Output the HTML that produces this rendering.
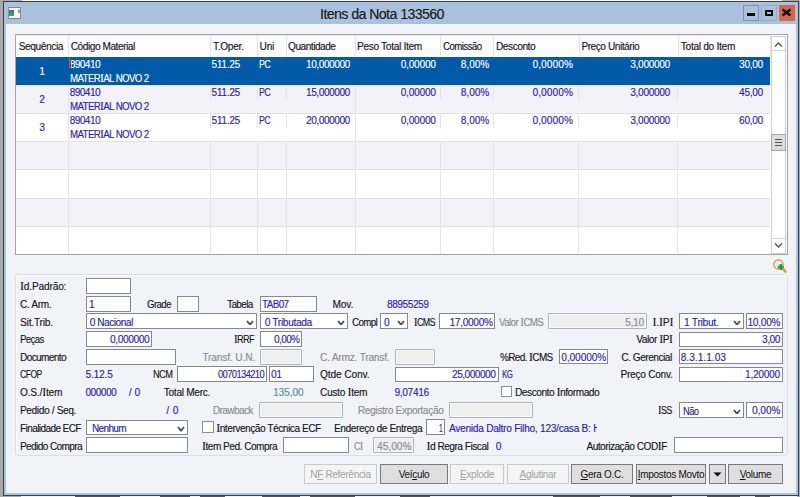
<!DOCTYPE html>
<html><head><meta charset="utf-8">
<style>
*{box-sizing:border-box;margin:0;padding:0}
html,body{width:800px;height:497px;overflow:hidden;background:#a9a9a9;position:relative}
body{font-family:"Liberation Sans",sans-serif;font-size:10px;letter-spacing:-0.3px;color:#16161e}
.a{position:absolute}
.t{position:absolute;white-space:nowrap;line-height:12px;height:12px;text-shadow:0.4px 0 0 rgba(20,20,30,0.35)}
.r{text-align:right}
.c{text-align:center}
.v{color:#2c1cb4;text-shadow:0.4px 0 0 rgba(44,28,180,0.35)}
.g{color:#8a8a98;text-shadow:0.4px 0 0 rgba(138,138,152,0.35)}
.w{color:#fff;text-shadow:0.4px 0 0 rgba(255,255,255,0.35)}
.inp{position:absolute;background:#fff;border:1px solid #858890}
.dis{position:absolute;background:#efefef;border:1px solid #afb3bb;border-radius:1px;box-shadow:inset 1px 1px 0 #f8f8f8,inset -1px -1px 0 #f8f8f8}
.hd{position:absolute;top:36px;height:21px;width:1px;background:#e4e4e4}
.btn{position:absolute;border:1px solid #7a7a7a;background:#dedede;text-align:center;line-height:19px;color:#111}
.btnd{position:absolute;border:1px solid #cacaca;background:#f4f4f4;text-align:center;line-height:19px;color:#a2a2a2}
.u{text-decoration:underline}
.si{font-family:"Liberation Serif",serif;font-size:11.5px;line-height:0}
</style></head><body>
<div class="a" style="left:21px;top:495px;width:776px;height:2px;background:#f4f4f4"></div>
<div class="a" style="left:22px;top:0;width:760px;height:1px;background:#f6f6f6"></div>
<div class="a" style="left:3px;top:1px;width:796px;height:495px;background:#3e4248"></div>
<div class="a" style="left:4px;top:2px;width:794px;height:493px;background:#a8c1dd"></div>
<div class="a" style="left:6px;top:24px;width:790px;height:469px;background:#f2f3f8"></div>
<div class="a" style="left:8px;top:7px;width:13px;height:12px;border:1px solid #8a8a8a;background:#f6f6f6"></div>
<div class="a" style="left:9px;top:10px;width:5px;height:6px;background:linear-gradient(#3a6ec0,#3cae5a)"></div>
<div class="a" style="left:18px;top:10px;width:2px;height:3px;background:linear-gradient(#4a7ed0,#7ed07a)"></div>
<div class="t" style="left:320px;top:6px;font-size:14px;line-height:16px;height:16px;letter-spacing:-0.5px;color:#1a1a1a">Itens da Nota 133560</div>
<div class="a" style="left:743px;top:5px;width:16px;height:16px;border:1px solid #7f92ad;background:#a8c1dd"></div>
<div class="a" style="left:747px;top:13px;width:8px;height:3px;background:#000"></div>
<div class="a" style="left:761px;top:5px;width:16px;height:16px;border:1px solid #97abc6;background:#a8c1dd"></div>
<div class="a" style="left:765px;top:10px;width:8px;height:6px;border:2px solid #000"></div>
<div class="a" style="left:779px;top:5px;width:16px;height:16px;background:#d9654c"></div>
<svg class="a" style="left:779px;top:5px" width="16" height="16"><path d="M3.5 4.5 L11.5 10.5 M11.5 4.5 L3.5 10.5" stroke="#000" stroke-width="2.2"/></svg>
<div class="a" style="left:15px;top:34px;width:773px;height:221px;border:1px solid #a4a4a8;background:#fff"></div>
<div class="a" style="left:16px;top:35px;width:754px;height:22px;background:#fcfcfc;border-top:1px solid #e8e8e8"></div>
<div class="hd" style="left:68px"></div>
<div class="hd" style="left:210px"></div>
<div class="hd" style="left:257px"></div>
<div class="hd" style="left:286px"></div>
<div class="hd" style="left:355px"></div>
<div class="hd" style="left:440px"></div>
<div class="hd" style="left:493px"></div>
<div class="hd" style="left:579px"></div>
<div class="hd" style="left:678px"></div>
<div class="hd" style="left:770px"></div>
<div class="t " style="left:18.7px;top:41px;letter-spacing:-0.325px;">Sequência</div>
<div class="t " style="left:70.8px;top:41px;letter-spacing:-0.401px;">Código Material</div>
<div class="t " style="left:212.9px;top:41px;letter-spacing:-0.193px;">T.Oper.</div>
<div class="t " style="left:259.6px;top:41px;letter-spacing:-0.142px;">Uni</div>
<div class="t " style="left:288.1px;top:41px;letter-spacing:-0.439px;">Quantidade</div>
<div class="t " style="left:357.0px;top:41px;letter-spacing:-0.256px;">Peso Total Item</div>
<div class="t " style="left:443.0px;top:41px;letter-spacing:-0.55px;transform:scaleX(0.9599);transform-origin:0 0;">Comissão</div>
<div class="t " style="left:496.0px;top:41px;letter-spacing:-0.384px;">Desconto</div>
<div class="t " style="left:581.4px;top:41px;letter-spacing:-0.4px;">Preço Unitário</div>
<div class="t " style="left:680.8px;top:41px;letter-spacing:-0.235px;">Total do Item</div>
<div class="a" style="left:16px;top:57px;width:754px;height:28px;background:#025aa9"></div>
<div class="a" style="left:16px;top:85px;width:754px;height:28px;background:#f2f2f8;border-top:1px solid #e2e2e5"></div>
<div class="a" style="left:16px;top:113px;width:754px;height:28px;background:#ffffff;border-top:1px solid #e2e2e5"></div>
<div class="a" style="left:16px;top:141px;width:754px;height:28px;background:#f2f2f8;border-top:1px solid #e2e2e5"></div>
<div class="a" style="left:16px;top:169px;width:754px;height:29px;background:#ffffff;border-top:1px solid #e2e2e5"></div>
<div class="a" style="left:16px;top:198px;width:754px;height:28px;background:#f2f2f8;border-top:1px solid #e2e2e5"></div>
<div class="a" style="left:16px;top:226px;width:754px;height:28px;background:#ffffff;border-top:1px solid #e2e2e5"></div>
<div class="a" style="left:68px;top:85px;width:1px;height:169px;background:#e3e3e8"></div>
<div class="a" style="left:355px;top:85px;width:1px;height:169px;background:#e3e3e8"></div>
<div class="a" style="left:210px;top:85px;width:1px;height:15px;background:#e3e3e8"></div>
<div class="a" style="left:210px;top:113px;width:1px;height:15px;background:#e3e3e8"></div>
<div class="a" style="left:210px;top:141px;width:1px;height:113px;background:#e3e3e8"></div>
<div class="a" style="left:257px;top:85px;width:1px;height:15px;background:#e3e3e8"></div>
<div class="a" style="left:257px;top:113px;width:1px;height:15px;background:#e3e3e8"></div>
<div class="a" style="left:257px;top:141px;width:1px;height:113px;background:#e3e3e8"></div>
<div class="a" style="left:286px;top:85px;width:1px;height:15px;background:#e3e3e8"></div>
<div class="a" style="left:286px;top:113px;width:1px;height:15px;background:#e3e3e8"></div>
<div class="a" style="left:286px;top:141px;width:1px;height:113px;background:#e3e3e8"></div>
<div class="a" style="left:440px;top:85px;width:1px;height:15px;background:#e3e3e8"></div>
<div class="a" style="left:440px;top:113px;width:1px;height:15px;background:#e3e3e8"></div>
<div class="a" style="left:440px;top:141px;width:1px;height:113px;background:#e3e3e8"></div>
<div class="a" style="left:493px;top:85px;width:1px;height:15px;background:#e3e3e8"></div>
<div class="a" style="left:493px;top:113px;width:1px;height:15px;background:#e3e3e8"></div>
<div class="a" style="left:493px;top:141px;width:1px;height:113px;background:#e3e3e8"></div>
<div class="a" style="left:578px;top:85px;width:1px;height:15px;background:#e3e3e8"></div>
<div class="a" style="left:578px;top:113px;width:1px;height:15px;background:#e3e3e8"></div>
<div class="a" style="left:578px;top:141px;width:1px;height:113px;background:#e3e3e8"></div>
<div class="a" style="left:677px;top:85px;width:1px;height:15px;background:#e3e3e8"></div>
<div class="a" style="left:677px;top:113px;width:1px;height:15px;background:#e3e3e8"></div>
<div class="a" style="left:677px;top:141px;width:1px;height:113px;background:#e3e3e8"></div>
<div class="t w c" style="left:16px;width:52px;top:66px">1</div>
<div class="t w" style="left:69.7px;top:59px;letter-spacing:-0.502px;">890410</div>
<div class="t w" style="left:70.0px;top:73px;letter-spacing:-0.55px;transform:scaleX(0.9555);transform-origin:0 0;">MATER<span class="si">I</span>AL NOVO 2</div>
<div class="t w" style="left:211.4px;top:59px;letter-spacing:-0.216px;">511.25</div>
<div class="t w" style="left:259.0px;top:59px;letter-spacing:-0.55px;transform:scaleX(0.8689);transform-origin:0 0;">PC</div>
<div class="t w" style="left:306.0px;top:59px;letter-spacing:-0.389px;">10,000000</div>
<div class="t w" style="left:400.7px;top:59px;letter-spacing:-0.164px;">0,00000</div>
<div class="t w" style="left:460.8px;top:59px;letter-spacing:0.009px;">8,00%</div>
<div class="t w" style="left:532.5px;top:59px;letter-spacing:0.136px;">0,0000%</div>
<div class="t w" style="left:630.3px;top:59px;letter-spacing:-0.264px;">3,000000</div>
<div class="t w" style="left:739.1px;top:59px;letter-spacing:-0.266px;">30,00</div>
<div class="t v c" style="left:16px;width:52px;top:94px">2</div>
<div class="t v" style="left:69.7px;top:87px;letter-spacing:-0.502px;">890410</div>
<div class="t v" style="left:70.0px;top:101px;letter-spacing:-0.55px;transform:scaleX(0.9555);transform-origin:0 0;">MATER<span class="si">I</span>AL NOVO 2</div>
<div class="t v" style="left:211.4px;top:87px;letter-spacing:-0.216px;">511.25</div>
<div class="t v" style="left:259.0px;top:87px;letter-spacing:-0.55px;transform:scaleX(0.8689);transform-origin:0 0;">PC</div>
<div class="t v" style="left:306.0px;top:87px;letter-spacing:-0.389px;">15,000000</div>
<div class="t v" style="left:400.7px;top:87px;letter-spacing:-0.164px;">0,00000</div>
<div class="t v" style="left:460.8px;top:87px;letter-spacing:0.009px;">8,00%</div>
<div class="t v" style="left:532.5px;top:87px;letter-spacing:0.136px;">0,0000%</div>
<div class="t v" style="left:630.3px;top:87px;letter-spacing:-0.264px;">3,000000</div>
<div class="t v" style="left:739.1px;top:87px;letter-spacing:-0.266px;">45,00</div>
<div class="t v c" style="left:16px;width:52px;top:122px">3</div>
<div class="t v" style="left:69.7px;top:115px;letter-spacing:-0.502px;">890410</div>
<div class="t v" style="left:70.0px;top:129px;letter-spacing:-0.55px;transform:scaleX(0.9555);transform-origin:0 0;">MATER<span class="si">I</span>AL NOVO 2</div>
<div class="t v" style="left:211.4px;top:115px;letter-spacing:-0.216px;">511.25</div>
<div class="t v" style="left:259.0px;top:115px;letter-spacing:-0.55px;transform:scaleX(0.8689);transform-origin:0 0;">PC</div>
<div class="t v" style="left:306.0px;top:115px;letter-spacing:-0.389px;">20,000000</div>
<div class="t v" style="left:400.7px;top:115px;letter-spacing:-0.164px;">0,00000</div>
<div class="t v" style="left:460.8px;top:115px;letter-spacing:0.009px;">8,00%</div>
<div class="t v" style="left:532.5px;top:115px;letter-spacing:0.136px;">0,0000%</div>
<div class="t v" style="left:630.3px;top:115px;letter-spacing:-0.264px;">3,000000</div>
<div class="t v" style="left:739.1px;top:115px;letter-spacing:-0.266px;">60,00</div>
<div class="a" style="left:69px;top:58px;width:2px;height:10px;background:linear-gradient(90deg,#c08040,#603020)"></div>
<div class="a" style="left:771px;top:36px;width:15px;height:218px;background:#fff;border:1px solid #cfcfcf"></div>
<div class="a" style="left:772px;top:50px;width:13px;height:1px;background:#d4d4d4"></div>
<div class="a" style="left:772px;top:238px;width:13px;height:1px;background:#d4d4d4"></div>
<svg class="a" style="left:774px;top:41px" width="9" height="7"><path d="M1 5.5 L4.5 2 L8 5.5" fill="none" stroke="#555" stroke-width="1.5"/></svg>
<svg class="a" style="left:774px;top:242px" width="9" height="7"><path d="M1 1.5 L4.5 5 L8 1.5" fill="none" stroke="#555" stroke-width="1.5"/></svg>
<div class="a" style="left:771px;top:134px;width:15px;height:17px;background:#dcdcdc;border:1px solid #a8a8a8"></div>
<div class="a" style="left:775px;top:139px;width:7px;height:1px;background:#555"></div>
<div class="a" style="left:775px;top:142px;width:7px;height:1px;background:#555"></div>
<div class="a" style="left:775px;top:145px;width:7px;height:1px;background:#555"></div>
<svg class="a" style="left:770px;top:256px" width="20" height="20"><circle cx="8.5" cy="8.5" r="4.6" fill="#e8eef8" stroke="#d9a860" stroke-width="1.6"/><path d="M12 12 L15.5 15.5" stroke="#d0a050" stroke-width="2.6" stroke-linecap="round"/><path d="M10.8 8 v6 M7.8 11 h6" stroke="#2e9a3a" stroke-width="2.4"/></svg>
<div class="a" style="left:15px;top:274px;width:773px;height:182px;border:1px solid #dcdfe6;border-radius:3px;box-shadow:inset 1px 1px 0 #fbfbfd"></div>
<div class="t " style="left:20.0px;top:281px;letter-spacing:-0.09px;"><span class="si">I</span>d.Padrão:</div>
<div class="inp" style="left:86px;top:278px;width:45px;height:16px;"></div>
<div class="t " style="left:20.0px;top:299px;letter-spacing:-0.31px;">C. Arm.</div>
<div class="inp" style="left:86px;top:296px;width:45px;height:16px;"></div>
<div class="t v" style="left:89px;top:299px;">1</div>
<div class="t " style="left:147.3px;top:299px;letter-spacing:-0.55px;transform:scaleX(0.9565);transform-origin:0 0;">Grade</div>
<div class="inp" style="left:177px;top:296px;width:22px;height:16px;"></div>
<div class="t " style="left:227.0px;top:299px;letter-spacing:-0.55px;transform:scaleX(0.9832);transform-origin:0 0;">Tabela</div>
<div class="inp" style="left:260px;top:296px;width:57px;height:16px;"></div>
<div class="t v" style="left:262.0px;top:299px;letter-spacing:-0.55px;transform:scaleX(0.9798);transform-origin:0 0;">TAB07</div>
<div class="t " style="left:332.5px;top:299px;letter-spacing:-0.05px;">Mov.</div>
<div class="t v" style="left:387.0px;top:299px;letter-spacing:-0.383px;">88955259</div>
<div class="t " style="left:20.0px;top:317px;letter-spacing:-0.131px;">Sit.Trib.</div>
<div class="inp" style="left:86px;top:313px;width:171px;height:16px;"></div>
<div class="t v" style="left:89.7px;top:317px;letter-spacing:-0.414px;">0 Nacional</div>
<svg class="a" style="left:246.0px;top:319.5px" width="8" height="5.6"><path d="M1 1 L4.0 4.6 L7 1" fill="none" stroke="#4a4a4a" stroke-width="1.8"/></svg>
<div class="inp" style="left:260px;top:313px;width:88px;height:16px;"></div>
<div class="t v" style="left:264.7px;top:317px;letter-spacing:-0.255px;">0 Tributada</div>
<svg class="a" style="left:337.0px;top:319.5px" width="8" height="5.6"><path d="M1 1 L4.0 4.6 L7 1" fill="none" stroke="#4a4a4a" stroke-width="1.8"/></svg>
<div class="t " style="left:352.0px;top:317px;letter-spacing:-0.55px;transform:scaleX(0.9632);transform-origin:0 0;">Compl</div>
<div class="inp" style="left:380px;top:313px;width:28px;height:16px;"></div>
<div class="t v" style="left:384px;top:317px;">0</div>
<svg class="a" style="left:397.0px;top:319.5px" width="8" height="5.6"><path d="M1 1 L4.0 4.6 L7 1" fill="none" stroke="#4a4a4a" stroke-width="1.8"/></svg>
<div class="t " style="left:413.75px;top:317px;letter-spacing:-0.55px;transform:scaleX(0.8795);transform-origin:0 0;"><span class="si">I</span>CMS</div>
<div class="inp" style="left:439px;top:313px;width:56px;height:16px;"></div>
<div class="t v" style="left:449.5px;top:317px;letter-spacing:-0.235px;">17,0000%</div>
<div class="t g" style="left:498.75px;top:317px;letter-spacing:-0.55px;transform:scaleX(0.9613);transform-origin:0 0;">Valor <span class="si">I</span>CMS</div>
<div class="dis" style="left:548px;top:313px;width:99px;height:16px;"></div>
<div class="t g" style="left:625.0px;top:317px;letter-spacing:-0.134px;">5,10</div>
<div class="t " style="left:652.5px;top:317px;letter-spacing:-0.038px;"><span class="si">I</span>.<span class="si">I</span>P<span class="si">I</span></div>
<div class="inp" style="left:679px;top:313px;width:65px;height:16px;"></div>
<div class="t v" style="left:684.1px;top:317px;letter-spacing:-0.204px;">1 Tribut.</div>
<svg class="a" style="left:733.0px;top:319.5px" width="8" height="5.6"><path d="M1 1 L4.0 4.6 L7 1" fill="none" stroke="#4a4a4a" stroke-width="1.8"/></svg>
<div class="inp" style="left:746px;top:313px;width:37px;height:16px;"></div>
<div class="t v" style="left:747.5px;top:317px;letter-spacing:-0.205px;">10,00%</div>
<div class="t " style="left:20.0px;top:334px;letter-spacing:-0.55px;transform:scaleX(0.9456);transform-origin:0 0;">Peças</div>
<div class="inp" style="left:86px;top:331px;width:66px;height:16px;"></div>
<div class="t v" style="left:110.0px;top:334px;letter-spacing:-0.307px;">0,000000</div>
<div class="t " style="left:234.0px;top:334px;letter-spacing:-0.55px;transform:scaleX(0.9018);transform-origin:0 0;"><span class="si">I</span>RRF</div>
<div class="inp" style="left:260px;top:331px;width:42px;height:16px;"></div>
<div class="t v" style="left:274.0px;top:334px;letter-spacing:-0.55px;transform:scaleX(0.99);transform-origin:0 0;">0,00%</div>
<div class="t " style="left:636.25px;top:334px;letter-spacing:-0.397px;">Valor <span class="si">I</span>P<span class="si">I</span></div>
<div class="inp" style="left:679px;top:332px;width:104px;height:15px;"></div>
<div class="t v" style="left:762.0px;top:334px;letter-spacing:-0.384px;">3,00</div>
<div class="t " style="left:20.0px;top:352px;letter-spacing:-0.55px;transform:scaleX(0.9963);transform-origin:0 0;">Documento</div>
<div class="inp" style="left:86px;top:349px;width:90px;height:16px;"></div>
<div class="t g" style="left:202.4px;top:352px;letter-spacing:-0.068px;">Transf. U.N.</div>
<div class="dis" style="left:260px;top:349px;width:42px;height:16px;"></div>
<div class="t g" style="left:320.0px;top:352px;letter-spacing:-0.142px;">C. Armz. Transf.</div>
<div class="dis" style="left:395px;top:349px;width:40px;height:16px;"></div>
<div class="t " style="left:499.5px;top:352px;letter-spacing:-0.55px;transform:scaleX(0.9867);transform-origin:0 0;">%Red. <span class="si">I</span>CMS</div>
<div class="inp" style="left:559px;top:349px;width:49px;height:15px;"></div>
<div class="t v" style="left:561.25px;top:352px;letter-spacing:-0.021px;">0,00000%</div>
<div class="t " style="left:621.25px;top:352px;letter-spacing:-0.419px;">C. Gerencial</div>
<div class="inp" style="left:679px;top:349px;width:104px;height:15px;"></div>
<div class="t v" style="left:680.65px;top:352px;letter-spacing:0.081px;">8.3.1.1.03</div>
<div class="t " style="left:20.25px;top:369px;letter-spacing:-0.55px;transform:scaleX(0.8485);transform-origin:0 0;">CFOP</div>
<div class="t v" style="left:85.5px;top:369px;letter-spacing:-0.108px;">5.12.5</div>
<div class="t " style="left:153.0px;top:369px;letter-spacing:-0.55px;transform:scaleX(0.9136);transform-origin:0 0;">NCM</div>
<div class="inp" style="left:177px;top:366px;width:90px;height:16px;"></div>
<div class="t v" style="left:218.0px;top:369px;letter-spacing:-0.55px;transform:scaleX(0.9197);transform-origin:0 0;">0070134210</div>
<div class="inp" style="left:269px;top:366px;width:45px;height:16px;"></div>
<div class="t v" style="left:271px;top:369px;">01</div>
<div class="t " style="left:320.0px;top:369px;letter-spacing:-0.035px;">Qtde Conv.</div>
<div class="inp" style="left:395px;top:367px;width:104px;height:15px;"></div>
<div class="t v" style="left:452.0px;top:369px;letter-spacing:-0.432px;">25,000000</div>
<div class="t v" style="left:502.0px;top:369px;letter-spacing:-0.55px;transform:scaleX(0.779);transform-origin:0 0;">KG</div>
<div class="t " style="left:620.5px;top:369px;letter-spacing:-0.2px;">Preço Conv.</div>
<div class="inp" style="left:679px;top:367px;width:104px;height:15px;"></div>
<div class="t v" style="left:745.0px;top:369px;letter-spacing:-0.181px;">1,20000</div>
<div class="t " style="left:20.0px;top:387px;letter-spacing:-0.119px;">O.S./<span class="si">I</span>tem</div>
<div class="t v" style="left:85.5px;top:387px;letter-spacing:-0.462px;">000000</div>
<div class="t v" style="left:128.75px;top:387px;letter-spacing:0.097px;">/ 0</div>
<div class="t " style="left:163.75px;top:387px;letter-spacing:-0.237px;">Total Merc.</div>
<div class="t " style="left:273.0px;top:387px;letter-spacing:-0.055px;color:#5e9ea6">135,00</div>
<div class="t " style="left:320.0px;top:387px;letter-spacing:-0.23px;">Custo <span class="si">I</span>tem</div>
<div class="t v" style="left:394.5px;top:387px;letter-spacing:-0.264px;">9,07416</div>
<div class="inp" style="left:501px;top:386px;width:11px;height:11px;border-color:#8e8e8e"></div>
<div class="t " style="left:515.0px;top:387px;letter-spacing:-0.385px;">Desconto <span class="si">I</span>nformado</div>
<div class="t " style="left:20.0px;top:405px;letter-spacing:-0.314px;">Pedido / Seq.</div>
<div class="t v" style="left:166.25px;top:405px;letter-spacing:0.472px;">/ 0</div>
<div class="t g" style="left:212.75px;top:405px;letter-spacing:-0.55px;color:#8a90a8transform:scaleX(0.989);transform-origin:0 0;">Drawback</div>
<div class="dis" style="left:259px;top:402px;width:84px;height:16px;"></div>
<div class="t g" style="left:357.8px;top:405px;letter-spacing:-0.258px;">Registro Exportação</div>
<div class="dis" style="left:449px;top:402px;width:84px;height:16px;"></div>
<div class="t " style="left:658.0px;top:405px;letter-spacing:-0.55px;transform:scaleX(0.8843);transform-origin:0 0;"><span class="si">I</span>SS</div>
<div class="inp" style="left:679px;top:402px;width:65px;height:16px;"></div>
<div class="t v" style="left:682.9px;top:406px;letter-spacing:-0.55px;transform:scaleX(0.9246);transform-origin:0 0;">Não</div>
<svg class="a" style="left:733.0px;top:408.5px" width="8" height="5.6"><path d="M1 1 L4.0 4.6 L7 1" fill="none" stroke="#4a4a4a" stroke-width="1.8"/></svg>
<div class="inp" style="left:746px;top:402px;width:37px;height:16px;"></div>
<div class="t v" style="left:752.0px;top:405px;letter-spacing:0.009px;">0,00%</div>
<div class="t " style="left:20.0px;top:423px;letter-spacing:-0.55px;transform:scaleX(0.9933);transform-origin:0 0;">Finalidade ECF</div>
<div class="inp" style="left:86px;top:420px;width:102px;height:15px;"></div>
<div class="t v" style="left:92.25px;top:423px;letter-spacing:-0.55px;transform:scaleX(0.9836);transform-origin:0 0;">Nenhum</div>
<svg class="a" style="left:177.0px;top:426.0px" width="8" height="5.6"><path d="M1 1 L4.0 4.6 L7 1" fill="none" stroke="#4a4a4a" stroke-width="1.8"/></svg>
<div class="inp" style="left:202px;top:421px;width:12px;height:12px;border-color:#8e8e8e"></div>
<div class="t " style="left:216.25px;top:423px;letter-spacing:-0.399px;"><span class="si">I</span>ntervenção Técnica ECF</div>
<div class="t " style="left:334.0px;top:423px;letter-spacing:-0.331px;">Endereço de Entrega</div>
<div class="inp" style="left:426px;top:419px;width:19px;height:16px;"></div>
<div class="t v" style="left:438.5px;top:423px;letter-spacing:-0.55px;transform:scaleX(0.65);transform-origin:0 0;">1</div>
<div class="a" style="left:449px;top:420px;width:148px;height:14px;overflow:hidden"><div class="t v" style="left:0;top:3px;letter-spacing:-0.2px">Avenida Daltro Filho, 123/casa B: H</div></div>
<div class="t " style="left:20.0px;top:441px;letter-spacing:-0.55px;transform:scaleX(0.9949);transform-origin:0 0;">Pedido Compra</div>
<div class="inp" style="left:86px;top:437px;width:102px;height:16px;"></div>
<div class="t " style="left:202.1px;top:441px;letter-spacing:-0.455px;"><span class="si">I</span>tem Ped. Compra</div>
<div class="inp" style="left:283px;top:437px;width:66px;height:16px;"></div>
<div class="t g" style="left:354.0px;top:441px;letter-spacing:-0.55px;transform:scaleX(0.8744);transform-origin:0 0;">C<span class="si">I</span></div>
<div class="dis" style="left:373px;top:437px;width:41px;height:16px;"></div>
<div class="t g" style="left:377.0px;top:441px;letter-spacing:0.095px;">45,00%</div>
<div class="t " style="left:426.6px;top:441px;letter-spacing:-0.441px;"><span class="si">I</span>d Regra Fiscal</div>
<div class="t v" style="left:495.7px;top:441px;">0</div>
<div class="t " style="left:586.4px;top:441px;letter-spacing:-0.433px;">Autorização COD<span class="si">I</span>F</div>
<div class="inp" style="left:674px;top:437px;width:109px;height:16px;"></div>
<div class="btnd" style="left:304px;top:464px;width:73px;height:20px">N<span class="u">F</span> Referência</div>
<div class="btn" style="left:380px;top:464px;width:68px;height:20px">Veí<span class="u">c</span>ulo</div>
<div class="btnd" style="left:450px;top:464px;width:54px;height:20px"><span class="u">E</span>xplode</div>
<div class="btnd" style="left:507px;top:464px;width:62px;height:20px"><span class="u">A</span>glutinar</div>
<div class="btn" style="left:571px;top:464px;width:62px;height:20px"><span class="u">G</span>era O.C.</div>
<div class="btn" style="left:636px;top:464px;width:70px;height:20px"><span class="u">I</span>mpostos Movto</div>
<div class="btn" style="left:709px;top:464px;width:17px;height:20px"></div>
<svg class="a" style="left:713px;top:472px" width="9" height="5"><path d="M0.5 0.5 L8.5 0.5 L4.5 4.5 Z" fill="#000"/></svg>
<div class="btn" style="left:728px;top:464px;width:55px;height:20px"><span class="u">V</span>olume</div>
<div class="a" style="left:75px;top:496px;width:45px;height:1px;background:#555"></div>
<div class="a" style="left:160px;top:496px;width:30px;height:1px;background:#555"></div>
<div class="a" style="left:200px;top:496px;width:25px;height:1px;background:#555"></div>
<div class="a" style="left:262px;top:496px;width:38px;height:1px;background:#555"></div>
<div class="a" style="left:310px;top:496px;width:45px;height:1px;background:#555"></div>
<div class="a" style="left:400px;top:496px;width:30px;height:1px;background:#555"></div>
<div class="a" style="left:553px;top:496px;width:47px;height:1px;background:#555"></div>
<div class="a" style="left:630px;top:496px;width:42px;height:1px;background:#555"></div>
<div class="a" style="left:707px;top:496px;width:33px;height:1px;background:#555"></div>
<div class="a" style="left:755px;top:496px;width:15px;height:1px;background:#555"></div>
</body></html>
